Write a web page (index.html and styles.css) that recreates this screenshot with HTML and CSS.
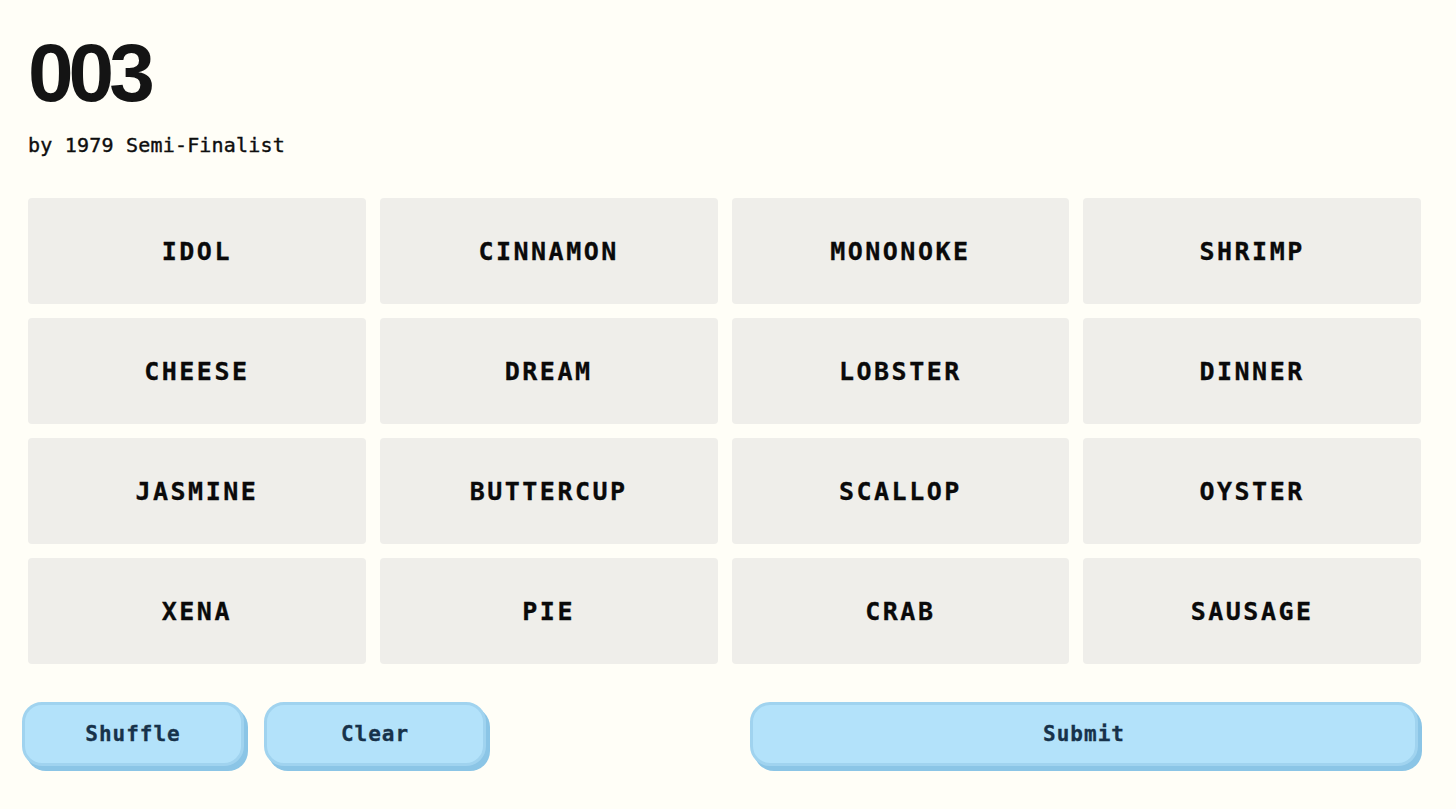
FILE: index.html
```html
<!DOCTYPE html>
<html lang="en">
<head>
<meta charset="utf-8">
<title>003</title>
<link rel="stylesheet" href="styles.css">
</head>
<body>
<main class="page">
  <header class="head">
    <h1 class="title">003</h1>
    <p class="byline">by 1979 Semi-Finalist</p>
  </header>
  <section class="grid">
    <button class="tile">IDOL</button>
    <button class="tile">CINNAMON</button>
    <button class="tile">MONONOKE</button>
    <button class="tile">SHRIMP</button>
    <button class="tile">CHEESE</button>
    <button class="tile">DREAM</button>
    <button class="tile">LOBSTER</button>
    <button class="tile">DINNER</button>
    <button class="tile">JASMINE</button>
    <button class="tile">BUTTERCUP</button>
    <button class="tile">SCALLOP</button>
    <button class="tile">OYSTER</button>
    <button class="tile">XENA</button>
    <button class="tile">PIE</button>
    <button class="tile">CRAB</button>
    <button class="tile">SAUSAGE</button>
  </section>
  <section class="actions">
    <button class="btn btn-small">Shuffle</button>
    <button class="btn btn-small">Clear</button>
    <button class="btn btn-submit">Submit</button>
  </section>
</main>
</body>
</html>
```
FILE: styles.css
```css
html, body {
  margin: 0;
  padding: 0;
  background: #fffef7;
}
body {
  font-family: "DejaVu Sans Mono", "Liberation Mono", monospace;
  color: #111;
}
.page {
  width: 1456px;
  height: 809px;
  box-sizing: border-box;
  padding: 31px 0 0 0;
}
.head {
  padding-left: 28px;
}
.title {
  margin: 0;
  font-family: "Liberation Sans", Arial, sans-serif;
  font-weight: 700;
  font-size: 82px;
  line-height: 84px;
  letter-spacing: -5px;
  color: #141414;
}
.byline {
  margin: 18px 0 0 0;
  font-size: 20px;
  line-height: 24px;
  letter-spacing: 0.2px;
  color: #0e0e0e;
  -webkit-text-stroke: 0.4px #0e0e0e;
}
.grid {
  margin: 41px 0 0 28px;
  width: 1393px;
  display: grid;
  grid-template-columns: repeat(4, 1fr);
  grid-auto-rows: 106px;
  gap: 14px;
}
.tile {
  border: none;
  border-radius: 4px;
  background: #efeeea;
  font-family: "DejaVu Sans Mono", "Liberation Mono", monospace;
  font-weight: 700;
  font-size: 25px;
  letter-spacing: 2.5px;
  color: #0a0a0a;
  -webkit-text-stroke: 0.3px #0a0a0a;
  padding: 0;
  display: flex;
  align-items: center;
  justify-content: center;
}
.actions {
  margin: 38px 0 0 22px;
  width: 1396px;
  display: flex;
  gap: 20px;
}
.btn {
  height: 64px;
  box-sizing: border-box;
  border: 3px solid #a0d3ef;
  border-radius: 20px;
  background: #b3e2fa;
  box-shadow: 4px 5px 0 #8bc5e6;
  font-family: "DejaVu Sans Mono", "Liberation Mono", monospace;
  font-weight: 700;
  font-size: 21px;
  letter-spacing: 1px;
  color: #17324a;
  -webkit-text-stroke: 0.3px #17324a;
  padding: 0;
}
.btn-small {
  width: 222px;
}
.btn-submit {
  width: 668px;
  margin-left: auto;
}
```
